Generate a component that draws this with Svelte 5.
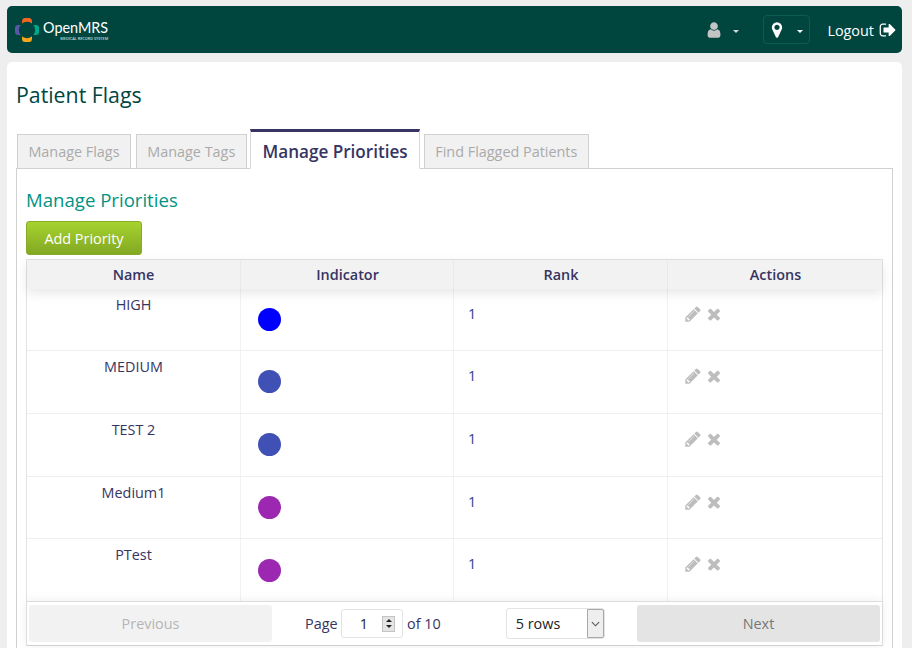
<script>
  const rows = [
    { name: 'HIGH', color: '#0000ff' },
    { name: 'MEDIUM', color: '#3f51b5' },
    { name: 'TEST 2', color: '#3f51b5' },
    { name: 'Medium1', color: '#9c27b0' },
    { name: 'PTest', color: '#9c27b0' }
  ];
  const tabs = ['Manage Flags', 'Manage Tags', 'Manage Priorities', 'Find Flagged Patients'];
  const pencil = 'M491 1536l91-91-235-235-91 91v107h128v128h107zm523-928q0-22-22-22-10 0-17 7l-542 542q-7 7-7 17 0 22 22 22 10 0 17-7l542-542q7-7 7-17zm-54-192l416 416-832 832h-416v-416zm683 96q0 53-37 90l-166 166-416-416 166-165q36-38 90-38 53 0 91 38l235 234q37 39 37 91z';
  const times = 'M1490 1322q0 40-28 68l-136 136q-28 28-68 28t-68-28l-294-294-294 294q-28 28-68 28t-68-28l-136-136q-28-28-28-68t28-68l294-294-294-294q-28-28-28-68t28-68l136-136q28-28 68-28t68 28l294 294 294-294q28-28 68-28t68 28l136 136q28 28 28 68t-28 68l-294 294 294 294q28 28 28 68z';
</script>

<div class="page">
  <header class="nav">
    <div class="logo">
      <svg class="mark" viewBox="0 0 24 24" width="24" height="24" aria-hidden="true">
        <path d="M7 7V3.5Q7 0 10 0H14Q17 0 17 3.5V7Z" fill="#f26522"/>
        <path d="M7 17V20.5Q7 24 10 24H14Q17 24 17 20.5V17Z" fill="#f9a61a"/>
        <path d="M7 7H3.5Q0 7 0 10V14Q0 17 3.5 17H7Z" fill="#5b57a6"/>
        <path d="M17 7H20.5Q24 7 24 10V14Q24 17 20.5 17H17Z" fill="#00a88f"/>
        <circle cx="12" cy="12" r="8.2" fill="#00463f"/>
      </svg>
      <div class="wordmark">
        <span class="brand">OpenMRS</span>
        <span class="tag">MEDICAL RECORD SYSTEM</span>
      </div>
    </div>
    <div class="nav-right">
      <div class="user">
        <svg viewBox="0 0 1792 1792" width="18" height="18" fill="#c4c4c4"><path d="M1536 1399q0 109-62.5 187t-150.5 78h-854q-88 0-150.5-78t-62.5-187q0-85 8.5-160.5t31.5-152 58.5-131 94-89 134.5-34.5q131 128 313 128t313-128q76 0 134.5 34.5t94 89 58.5 131 31.5 152 8.5 160.5zm-256-887q0 159-112.5 271.5t-271.5 112.5-271.5-112.5-112.5-271.5 112.5-271.5 271.5-112.5 271.5 112.5 112.5 271.5z"/></svg>
        <span class="caret dim"></span>
      </div>
      <div class="location">
        <svg viewBox="0 0 1792 1792" width="18" height="18" fill="#fff"><path d="M1152 640q0-106-75-181t-181-75-181 75-75 181 75 181 181 75 181-75 75-181zm256 0q0 109-33 179l-364 774q-16 33-47.5 52t-67.5 19-67.5-19-47.5-52l-365-774q-33-70-33-179 0-212 150-362t362-150 362 150 150 362z"/></svg>
        <span class="caret"></span>
      </div>
      <div class="logout">
        <span class="logout-text">Logout</span>
        <svg viewBox="0 0 1792 1792" width="18" height="18" fill="#fff"><path d="M704 1440q0 4 1 20t.5 26.5-3 23.5-10 19.5-20.5 6.5h-320q-119 0-203.5-84.5t-84.5-203.5v-704q0-119 84.5-203.5t203.5-84.5h320q13 0 22.5 9.5t9.5 22.5q0 4 1 20t.5 26.5-3 23.5-10 19.5-20.5 6.5h-320q-66 0-113 47t-47 113v704q0 66 47 113t113 47h312l11.5 1 11.5 3 8 5.5 7 9 2 13.5zm928-544q0 26-19 45l-544 544q-19 19-45 19t-45-19-19-45v-288h-448q-26 0-45-19t-19-45v-384q0-26 19-45t45-19h448v-288q0-26 19-45t45-19 45 19l544 544q19 19 19 45z"/></svg>
      </div>
    </div>
  </header>

  <main class="card">
    <h1>Patient Flags</h1>
    <div class="tabs">
      {#each tabs as t, i}
        <div class="tab" class:active={i === 2}>{t}</div>
      {/each}
    </div>
    <section class="panel">
      <h2>Manage Priorities</h2>
      <button class="add">Add Priority</button>
      <div class="table">
        <div class="thead">
          <div class="th">Name</div>
          <div class="th">Indicator</div>
          <div class="th">Rank</div>
          <div class="th">Actions</div>
        </div>
        {#each rows as r}
          <div class="row">
            <div class="td name">{r.name}</div>
            <div class="td"><span class="dot" style="background:{r.color}"></span></div>
            <div class="td rank">1</div>
            <div class="td actions">
              <svg viewBox="0 0 1792 1792" width="18" height="18" fill="#bdbdbd"><path d={pencil}/></svg>
              <svg viewBox="0 0 1792 1792" width="18" height="18" fill="#bdbdbd"><path d={times}/></svg>
            </div>
          </div>
        {/each}
        <div class="pager">
          <button class="pg prev">Previous</button>
          <div class="center">
            <span class="label">Page</span>
            <div class="num">
              <span class="val">1</span>
              <span class="spin"><i class="up"></i><i class="down"></i></span>
            </div>
            <span class="label">of 10</span>
            <div class="select">
              <span>5 rows</span>
              <span class="sel-btn">
                <svg viewBox="0 0 10 6" width="9" height="6"><path d="M1 1l4 4 4-4" fill="none" stroke="#555" stroke-width="1.2"/></svg>
              </span>
            </div>
          </div>
          <button class="pg next">Next</button>
        </div>
      </div>
    </section>
  </main>
</div>

<style>
  :global(html), :global(body) { overflow: hidden; }
  :global(body) { background: #eeeeee; font-family: "Open Sans", sans-serif; color: #363463; }
  .page { padding: 6px 10px 0 7px; height: 642px; overflow: hidden; }

  .nav { height: 47px; background: #00463f; border-radius: 5px; display: flex; align-items: center; justify-content: space-between; color: #fff; }
  .logo { display: flex; align-items: center; margin-left: 8px; gap: 4px; }
  .mark { display: block; }
  .wordmark { display: flex; flex-direction: column; align-items: flex-end; padding-top: 3px; }
  .brand { font-family: Lato, sans-serif; font-size: 14.4px; line-height: 14px; font-weight: 400; color: #fff; }
  .tag { font-family: "Open Sans", sans-serif; font-size: 3.8px; line-height: 5px; font-weight: 600; color: #cfdcd9; white-space: nowrap; margin-top: 0.5px; }
  .nav-right { display: flex; align-items: center; }
  .user { display: flex; align-items: center; gap: 10px; }
  .caret { display: block; width: 0; height: 0; border-left: 3.5px solid transparent; border-right: 3.5px solid transparent; border-top: 3.5px solid #fff; margin-top: 3px; }
  .caret.dim { border-top-color: #d8d8d8; }
  .location { margin-left: 24px; width: 47px; height: 29px; box-sizing: border-box; border: 1px solid #0c5c52; border-radius: 4px; display: flex; align-items: center; gap: 11px; padding-left: 4px; }
  .logout { margin-left: 17px; margin-right: 5px; display: flex; align-items: center; gap: 5px; font-size: 14.4px; }
  .logout-text { padding-top: 1px; }

  .card { margin-top: 9px; background: #fff; border-radius: 5px 5px 0 0; padding: 0 9px; height: 600px; }
  h1 { margin: 0; padding-top: 18px; font-size: 21.3px; line-height: 30px; font-weight: 400; color: #00463f; }

  .tabs { display: flex; align-items: flex-end; margin-top: 19px; padding-left: 1px; gap: 5px; position: relative; z-index: 1; margin-bottom: -1px; }
  .tab { box-sizing: border-box; height: 35px; padding: 0 10.4px; background: #f1f1f1; border: 1px solid #d0d0d0; font-size: 14.4px; line-height: 34px; color: #aaa; white-space: nowrap; }
  .tab.active { height: 40px; margin: 0 -1px 0 -1.5px; padding: 0 11.3px; background: #fff; border: 1px solid #d8d8d8; border-top: 3px solid #363463; border-bottom: 1px solid #fff; font-size: 17.1px; font-weight: 600; line-height: 39px; color: #363463; }

  .panel { border: 1px solid #d0d0d0; padding: 18px 9px 0; height: 500px; }
  h2 { margin: 0; font-size: 18.6px; line-height: 26px; font-weight: 400; color: #009384; }
  .add { display: block; margin-top: 8px; width: 116px; height: 34px; padding: 0; border: 1px solid #88ab28; border-radius: 3px; background: linear-gradient(#a6d32e, #83a823); color: #fff; font: 400 14.4px "Open Sans", sans-serif; }

  .table { margin-top: 4px; border: 1px solid #e3e3e3; border-bottom: 1px solid #d8d8d8; width: 857px; box-sizing: border-box; }
  .thead { display: grid; grid-template-columns: 213px 213px 214px 1fr; height: 29px; background: #f2f2f2; box-shadow: 0 4px 12px rgba(0,0,0,.1); position: relative; }
  .th { font-size: 14.4px; font-weight: 600; line-height: 29px; text-align: center; border-left: 1px solid #e9e9e9; color: #363463; padding-left: 1px; }
  .th:first-child { border-left: 0; padding-left: 0; }
  .row { display: grid; grid-template-columns: 213px 213px 214px 1fr; height: 62.75px; border-bottom: 1px solid #eeeeee; box-sizing: border-box; }
  .thead + .row { height: 62px; }
  .td { border-left: 1px solid #f2f2f2; font-size: 14.4px; box-sizing: border-box; }
  .td:first-child { border-left: 0; }
  .name { text-align: center; line-height: 19px; padding-top: 6px; }
  .dot { display: block; width: 23px; height: 23px; border-radius: 50%; margin: 19.4px 0 0 17px; }
  .rank { padding: 15px 0 0 14px; line-height: 19px; color: #363f8a; }
  .actions { display: flex; align-items: flex-start; gap: 3px; padding: 16.2px 0 0 16px; }

  .pager { display: flex; align-items: center; justify-content: space-between; height: 44px; padding: 0 2px; border-top: 1px solid #dcdcdc; background: #fff; box-sizing: border-box; margin-top: -1px; position: relative; box-shadow: 0 0 10px rgba(0,0,0,.08); }
  .pg { width: 243px; height: 37px; padding: 0; border: 0; border-radius: 3px; font: 400 14.4px "Open Sans", sans-serif; }
  .prev { background: #f2f2f2; color: #b5b5b5; }
  .next { background: #e4e4e4; color: #777; }
  .center { display: flex; align-items: center; flex: 1; padding-left: 33px; font-size: 14.4px; }
  .num { margin: 0 4px 0 3.5px; width: 62px; height: 29px; box-sizing: border-box; border: 1px solid #e3e3e3; border-radius: 3px; display: flex; align-items: center; justify-content: flex-end; gap: 14px; padding-right: 7px; color: #222; }
  .spin { display: flex; flex-direction: column; width: 13px; height: 16px; border: 1px solid #c4c4c4; background: #e4e4e4; box-sizing: border-box; align-items: center; justify-content: space-around; padding: 1px 0; }
  .spin i { display: block; width: 0; height: 0; border-left: 3px solid transparent; border-right: 3px solid transparent; }
  .spin .up { border-bottom: 3px solid #222; }
  .spin .down { border-top: 3px solid #222; }
  .select { margin-left: 65px; width: 99px; height: 31px; box-sizing: border-box; border: 1px solid #e3e3e3; border-radius: 3px; display: flex; align-items: center; justify-content: space-between; padding-left: 9px; color: #222; }
  .sel-btn { width: 17px; height: 29px; box-sizing: border-box; border: 1px solid #a8a8a8; background: #eeeeee; display: flex; align-items: center; justify-content: center; border-radius: 0 2px 2px 0; }
</style>
